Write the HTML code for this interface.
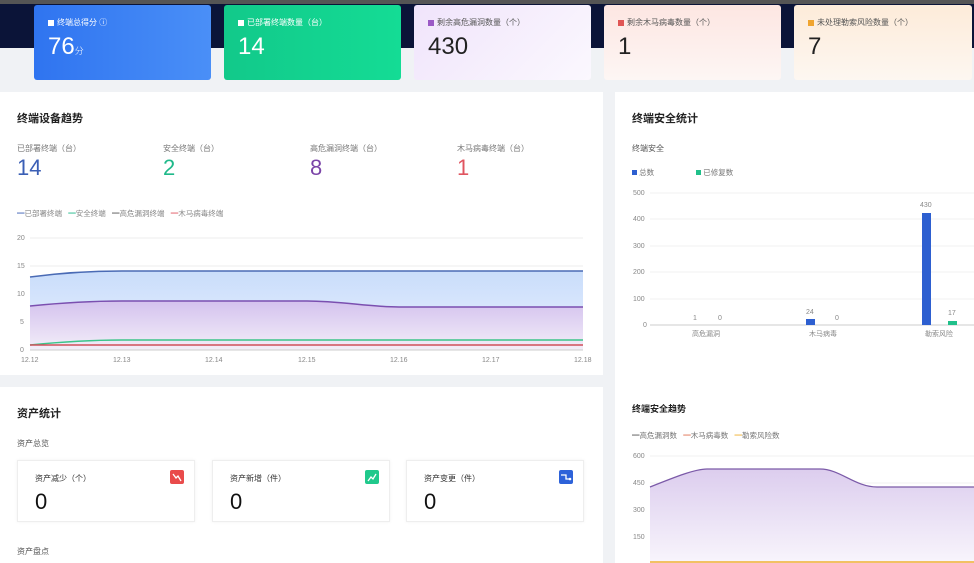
<!DOCTYPE html>
<html><head><meta charset="utf-8"><style>
*{margin:0;padding:0;box-sizing:border-box}
body{width:974px;height:563px;overflow:hidden;background:#f0f2f5;font-family:"Liberation Sans","Noto Sans CJK SC",sans-serif;position:relative;color:#333}
.abs{position:absolute}
.band{left:0;top:0;width:974px;height:48px;background:#0b1438}
.stripe{left:0;top:0;width:974px;height:4px;background:#555}
.card{top:5px;height:75px;border-radius:3px;padding:12px 14px}
.card .t{font-size:8px;display:flex;align-items:center;gap:3px}
.card .t i{display:inline-block;width:6px;height:6px}
.card .v{font-size:24px;margin-top:5px;font-weight:300}
.panel{background:#fff}
h3{font-size:11px;font-weight:bold;color:#222;position:absolute}
.sm{font-size:8px;color:#777;position:absolute}
.ax{font-size:7px;color:#888;position:absolute}
.num{font-size:22px;position:absolute}
.box{position:absolute;top:460px;width:178px;height:62px;border:1px solid #eee;box-shadow:0 0 3px rgba(0,0,0,.06);background:#fff}
.box .l{position:absolute;left:17px;top:12px;font-size:8px;color:#333}
.box .n{position:absolute;left:17px;top:28px;font-size:22px;color:#111}
.box svg{position:absolute;right:10px;top:9px}
</style></head><body>
<div class="abs band"></div><div class="abs stripe"></div>
<div class="abs card" style="left:34px;width:177px;background:linear-gradient(90deg,#2f74f0,#4a8ff7);color:#fff"><div class="t"><i style="background:#fff"></i>终端总得分 ⓘ</div><div class="v">76<span style="font-size:9px">分</span></div></div>
<div class="abs card" style="left:224px;width:177px;background:linear-gradient(90deg,#12c98a,#14dc95);color:#fff"><div class="t"><i style="background:#fff"></i>已部署终端数量（台）</div><div class="v">14</div></div>
<div class="abs card" style="left:414px;width:177px;background:linear-gradient(135deg,#f0e4fb,#fbf8fe);color:#222"><div class="t" style="color:#555"><i style="background:#9b59c6"></i>剩余高危漏洞数量（个）</div><div class="v">430</div></div>
<div class="abs card" style="left:604px;width:177px;background:linear-gradient(180deg,#fde6e2,#fdf6f4);color:#222"><div class="t" style="color:#555"><i style="background:#e05555"></i>剩余木马病毒数量（个）</div><div class="v">1</div></div>
<div class="abs card" style="left:794px;width:178px;background:linear-gradient(180deg,#fdebd9,#fdf7f1);color:#222"><div class="t" style="color:#555"><i style="background:#f0a530"></i>未处理勒索风险数量（个）</div><div class="v">7</div></div>

<div class="abs panel" style="left:0;top:92px;width:603px;height:283px"></div>
<div class="abs panel" style="left:0;top:387px;width:603px;height:176px"></div>
<div class="abs panel" style="left:615px;top:92px;width:359px;height:471px"></div>

<h3 style="left:17px;top:110px">终端设备趋势</h3>
<div class="sm" style="left:17px;top:143px">已部署终端（台）</div><div class="num" style="left:17px;top:155px;color:#3b5fb5">14</div>
<div class="sm" style="left:163px;top:143px">安全终端（台）</div><div class="num" style="left:163px;top:155px;color:#1fb98a">2</div>
<div class="sm" style="left:310px;top:143px">高危漏洞终端（台）</div><div class="num" style="left:310px;top:155px;color:#7b45a8">8</div>
<div class="sm" style="left:457px;top:143px">木马病毒终端（台）</div><div class="num" style="left:457px;top:155px;color:#e05560">1</div>
<div class="ax" style="left:17px;top:208px;font-size:7.5px"><span style="color:#3b5fb5">━</span>已部署终端 &nbsp; <span style="color:#1fb98a">━</span>安全终端 &nbsp; <span style="color:#555">━</span>高危漏洞终端 &nbsp; <span style="color:#e05560">━</span>木马病毒终端</div>
<svg class="abs" style="left:0;top:230px" width="603" height="140">
<defs><linearGradient id="gb" x1="0" y1="0" x2="0" y2="1"><stop offset="0" stop-color="#c9ddfb"/><stop offset="1" stop-color="#e9f0fd"/></linearGradient>
<linearGradient id="gp" x1="0" y1="0" x2="0" y2="1"><stop offset="0" stop-color="#d4c2ee"/><stop offset="1" stop-color="#f3eef9"/></linearGradient></defs>
<g stroke="#eee" stroke-width="1"><line x1="30" y1="8" x2="583" y2="8"/><line x1="30" y1="36" x2="583" y2="36"/><line x1="30" y1="64" x2="583" y2="64"/><line x1="30" y1="92" x2="583" y2="92"/></g>
<path d="M30 47 C60 43 90 41 122 41 L583 41 L583 120 L30 120Z" fill="url(#gb)"/>
<path d="M30 47 C60 43 90 41 122 41 L583 41" fill="none" stroke="#4a6bb5" stroke-width="1.5"/>
<path d="M30 76 C60 73 90 71 122 71 L307 71 C340 71 370 77 399 77 L583 77 L583 120 L30 120Z" fill="url(#gp)"/>
<path d="M30 76 C60 73 90 71 122 71 L307 71 C340 71 370 77 399 77 L583 77" fill="none" stroke="#7b4fb0" stroke-width="1.5"/>
<path d="M30 115 C60 112 90 110 122 110 L583 110" fill="none" stroke="#3cc48a" stroke-width="1.5"/>
<path d="M30 115 L583 115" stroke="#d0505a" stroke-width="1.5"/>
<line x1="30" y1="120" x2="583" y2="120" stroke="#ccc"/>
<g font-size="7" fill="#888" font-family="Liberation Sans"><text x="17" y="10">20</text><text x="17" y="38">15</text><text x="17" y="66">10</text><text x="20" y="94">5</text><text x="20" y="122">0</text>
<text x="21" y="132">12.12</text><text x="113" y="132">12.13</text><text x="205" y="132">12.14</text><text x="298" y="132">12.15</text><text x="390" y="132">12.16</text><text x="482" y="132">12.17</text><text x="574" y="132">12.18</text></g>
</svg>

<h3 style="left:17px;top:405px">资产统计</h3>
<div class="sm" style="left:17px;top:438px;color:#555">资产总览</div>
<div class="box" style="left:17px"><div class="l">资产减少（个）</div><div class="n">0</div><svg width="14" height="14"><rect width="14" height="14" rx="2" fill="#e94b4b"/><path d="M3 4 L6 8 L8 6 L11 11" fill="none" stroke="#fff" stroke-width="1.3"/></svg></div>
<div class="box" style="left:212px"><div class="l">资产新增（件）</div><div class="n">0</div><svg width="14" height="14"><rect width="14" height="14" rx="2" fill="#20c98c"/><path d="M3 11 L6 7 L8 9 L11 4" fill="none" stroke="#fff" stroke-width="1.3"/></svg></div>
<div class="box" style="left:406px"><div class="l">资产变更（件）</div><div class="n">0</div><svg width="14" height="14"><rect width="14" height="14" rx="2" fill="#2d62d9"/><path d="M2 5 L7 5 L7 9 L12 9" fill="none" stroke="#fff" stroke-width="1.3"/><circle cx="11" cy="9" r="1.3" fill="#fff"/></svg></div>
<div class="sm" style="left:17px;top:546px;color:#555">资产盘点</div>

<h3 style="left:632px;top:110px">终端安全统计</h3>
<div class="sm" style="left:632px;top:143px;color:#555">终端安全</div>
<div class="ax" style="left:632px;top:167px;font-size:7.5px;color:#777"><span style="display:inline-block;width:5px;height:5px;background:#2d5fd0"></span> 总数 <span style="display:inline-block;width:40px"></span><span style="display:inline-block;width:5px;height:5px;background:#20c08a"></span> 已修复数</div>
<svg class="abs" style="left:615px;top:185px" width="359" height="160">
<g stroke="#f0f0f0"><line x1="35" y1="8" x2="359" y2="8"/><line x1="35" y1="34" x2="359" y2="34"/><line x1="35" y1="61" x2="359" y2="61"/><line x1="35" y1="87" x2="359" y2="87"/><line x1="35" y1="114" x2="359" y2="114"/></g>
<line x1="35" y1="140" x2="359" y2="140" stroke="#ccc"/>
<rect x="191" y="134" width="9" height="6" fill="#2d5fd0"/>
<rect x="307" y="28" width="9" height="112" fill="#2d5fd0"/>
<rect x="333" y="136" width="9" height="4" fill="#20c08a"/>
<g font-size="7" fill="#888" font-family="Liberation Sans"><text x="18" y="10">500</text><text x="18" y="36">400</text><text x="18" y="63">300</text><text x="18" y="89">200</text><text x="18" y="116">100</text><text x="28" y="142">0</text>
<text x="78" y="135">1</text><text x="103" y="135">0</text><text x="191" y="129">24</text><text x="220" y="135">0</text><text x="305" y="22">430</text><text x="333" y="130">17</text>
<text x="77" y="151">高危漏洞</text><text x="194" y="151">木马病毒</text><text x="310" y="151">勒索风险</text></g>
</svg>

<h3 style="left:632px;top:402px;font-size:9px">终端安全趋势</h3>
<div class="ax" style="left:632px;top:430px;font-size:7.5px;color:#777"><span style="color:#555">━</span>高危漏洞数 &nbsp; <span style="color:#e07050">━</span>木马病毒数 &nbsp; <span style="color:#f0b030">━</span>勒索风险数</div>
<svg class="abs" style="left:615px;top:450px" width="359" height="113">
<defs><linearGradient id="gp2" x1="0" y1="0" x2="0" y2="1"><stop offset="0" stop-color="#dccdee"/><stop offset="1" stop-color="#f8f5fc"/></linearGradient></defs>
<g stroke="#f0f0f0"><line x1="35" y1="6" x2="359" y2="6"/><line x1="35" y1="33" x2="359" y2="33"/><line x1="35" y1="60" x2="359" y2="60"/><line x1="35" y1="87" x2="359" y2="87"/></g>
<path d="M35 37 C60 27 80 19 92 19 L205 19 C225 19 240 37 262 37 L359 37 L359 113 L35 113Z" fill="url(#gp2)"/>
<path d="M35 37 C60 27 80 19 92 19 L205 19 C225 19 240 37 262 37 L359 37" fill="none" stroke="#7b5aa8" stroke-width="1.3"/>
<line x1="35" y1="112" x2="359" y2="112" stroke="#f0b030" stroke-width="1.5"/>
<g font-size="7" fill="#888" font-family="Liberation Sans"><text x="18" y="8">600</text><text x="18" y="35">450</text><text x="18" y="62">300</text><text x="18" y="89">150</text></g>
</svg>
</body></html>
